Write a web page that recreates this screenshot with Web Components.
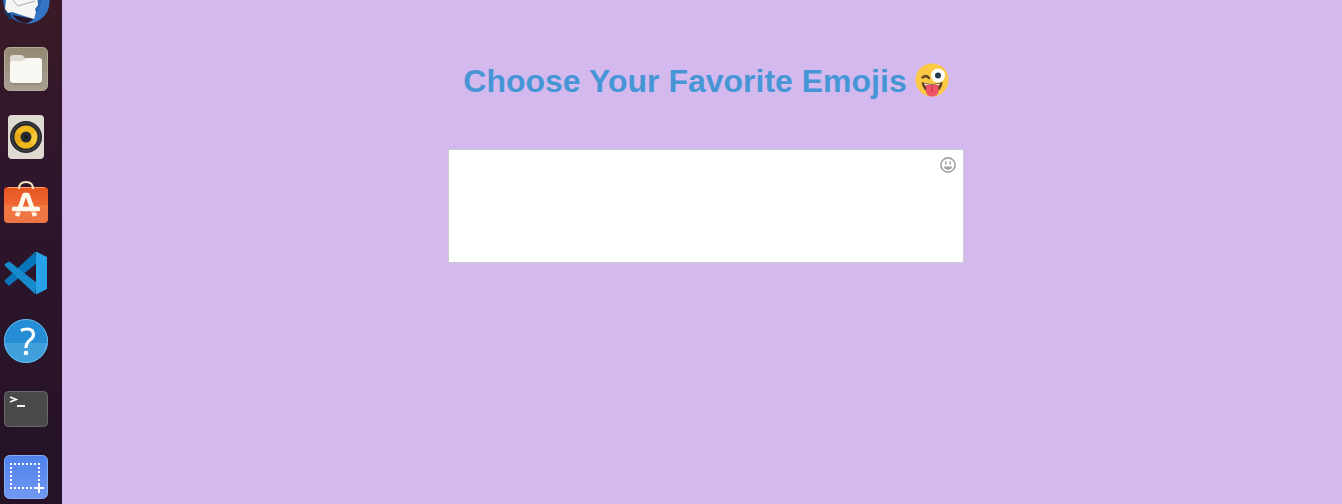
<!DOCTYPE html>
<html lang="en">
<head>
<meta charset="utf-8">
<title>Choose Your Favorite Emojis</title>
<style>
html, body { margin: 0; min-height: 100vh; background: #d4b9ef; }
body { font-family: "Liberation Sans", Arial, sans-serif; }
</style>
</head>
<body>
<desktop-view>
  <app-dock slot="dock"></app-dock>
  <emoji-page>
    <emoji-heading>Choose Your Favorite Emojis</emoji-heading>
    <emoji-field label="Your emojis"></emoji-field>
  </emoji-page>
</desktop-view>

<template id="desktop-view">
  <style>
    :host { display: grid; grid-template-columns: 62px 1fr; min-height: 100vh; }
  </style>
  <slot name="dock"></slot>
  <slot></slot>
</template>

<template id="app-dock">
  <style>
    :host { display: block; height: 100vh; overflow: hidden; background: linear-gradient(#3a1a26 0%, #2e162c 35%, #251226 100%); }
    nav { box-sizing: border-box; height: 100%; display: flex; flex-direction: column; justify-content: flex-end; gap: 24px; padding: 0 0 5px 4px; }
    button { flex: none; width: 44px; height: 44px; padding: 0; border: 0; background: none; }
    svg { display: block; width: 44px; height: 44px; overflow: visible; }
  </style>
  <nav aria-label="Applications">
    <button aria-label="Mail">
      <svg viewBox="0 0 44 44">
        <circle cx="22" cy="21" r="23" fill="#2a68b4"/>
        <path d="M38 4Q49 17 44 31Q38 44 22 45Q34 38 38 22Z" fill="#3475c5"/>
        <path d="M0 31L4 29L8 39L6 41Q1 36 0 31Z" fill="#163865"/>
        <path d="M8 36L30 40L24 44Q14 44 8 36Z" fill="#2a1526"/>
        <path d="M2 20L33 15L34 26L31 30L32 33L30 40L20 37L8 33L4 34L1 30Z" fill="#f5f5f3"/>
        <path d="M8 20L14 27L31 22" fill="none" stroke="#a8adb5" stroke-width="1"/>
      </svg>
    </button>
    <button aria-label="Files">
      <svg viewBox="0 0 44 44">
        <defs><linearGradient id="f" x2="0" y2="1"><stop stop-color="#958975"/><stop offset="1" stop-color="#a79f91"/></linearGradient></defs>
        <rect x=".5" y=".5" width="43" height="43" rx="5" fill="url(#f)" stroke="#b3ab98"/>
        <path d="M6 19V11Q6 8 9 8H17Q19 8 20 10L22 12V19Z" fill="#dfdad3"/>
        <path d="M6 18Q6 14 9 14H17Q20 14 21 12Q22 11 24 11H35Q38 11 38 14V33Q38 36 35 36H9Q6 36 6 33Z" fill="#f9f8f2"/>
        <path d="M7 36Q8 37 10 37H34Q37 37 38 35" fill="none" stroke="#857e6c"/>
      </svg>
    </button>
    <button aria-label="Music">
      <svg viewBox="0 0 44 44">
        <rect x="4" y="0" width="36" height="44" rx="4" fill="#dfdbd3"/>
        <circle cx="22" cy="22" r="16" fill="#282a2f"/>
        <circle cx="22" cy="22" r="14" fill="none" stroke="#474746" stroke-width="1"/>
        <circle cx="22" cy="22" r="11.500" fill="#f1b81e"/>
        <path d="M22 22L32 17A11 11 0 0 1 30 30Z" fill="#f8c83c"/>
        <path d="M22 22L12 17A11 11 0 0 0 14 30Z" fill="#e7aa15"/>
        <circle cx="22" cy="22" r="5.500" fill="#2a2b30"/>
        <circle cx="22" cy="22" r="2" fill="#17191b"/>
      </svg>
    </button>
    <button aria-label="Software">
      <svg viewBox="0 0 44 44">
        <defs><linearGradient id="s" x2="0" y2="1"><stop stop-color="#e85523"/><stop offset=".5" stop-color="#ed6731"/><stop offset=".51" stop-color="#f17742"/><stop offset="1" stop-color="#ee7544"/></linearGradient></defs>
        <rect x="0" y="4" width="44" height="36" rx="4" fill="url(#s)"/>
        <path d="M4 4.500H40" stroke="#ffa365"/>
        <path d="M15 6Q15-1 22-1Q29-1 29 6" fill="none" stroke="#f5dfbb" stroke-width="2"/>
        <path d="M13 33L20.500 12H23.500L31 33" fill="none" stroke="#fff8ec" stroke-width="4.500" stroke-linejoin="round"/>
        <path d="M10 28.800H34" stroke="#ed6a35"/>
        <path d="M10 26H34" stroke="#fffaf0" stroke-width="4.500" stroke-linecap="round"/>
      </svg>
    </button>
    <button aria-label="Code editor">
      <svg viewBox="0 0 44 44">
        <path d="M1 31Q0 30 1 29L31 1L33 12L6 34Q5 35 4 34Z" fill="#0875b8"/>
        <path d="M1 15Q0 14 1 13L4 11Q5 10 6 11L33 32L31 43Z" fill="#168bcc"/>
        <path d="M31 1L33 1L43 6V38L33 43L31 43Q32 43 32 40V4Q32 2 31 1Z" fill="#27a2e9"/>
      </svg>
    </button>
    <button aria-label="Help">
      <svg viewBox="0 0 44 44">
        <circle cx="22" cy="22" r="22" fill="#248dd5"/>
        <path d="M.1 24H43.900A22 22 0 0 1 .1 24Z" fill="#419fdc"/>
        <circle cx="22" cy="22" r="21.500" fill="none" stroke="#64b7e6"/>
        <path d="M17 11.500Q20 10 23 10Q29.500 10 29.500 15.500Q29.500 18.500 26 21Q22 24 22 29" fill="none" stroke="#fff" stroke-width="3.200"/>
        <circle cx="22" cy="34" r="2.300" fill="#fff"/>
      </svg>
    </button>
    <button aria-label="Terminal">
      <svg viewBox="0 0 44 44">
        <rect x=".5" y="4.500" width="43" height="35" rx="4" fill="#4b4a4a" stroke="#6a6868"/>
        <path d="M6 10L12 12.500L6 15" fill="none" stroke="#f4f4f4" stroke-width="1.800"/>
        <path d="M13 19H21" stroke="#f4f4f4" stroke-width="2"/>
      </svg>
    </button>
    <button aria-label="Screenshot">
      <svg viewBox="0 0 44 44">
        <defs><linearGradient id="p" x2="0" y2="1"><stop stop-color="#4e80ed"/><stop offset="1" stop-color="#7199f2"/></linearGradient></defs>
        <rect x=".5" y=".5" width="43" height="43" rx="5" fill="url(#p)" stroke="#86adf6"/>
        <path d="M6 9H36M35 12V28M7 12V34M6 33H30" fill="none" stroke="#fff" stroke-width="2" stroke-dasharray="2 2"/>
        <path d="M35 28V38M30 33H40" stroke="#fff" stroke-width="2"/>
      </svg>
    </button>
  </nav>
</template>

<template id="emoji-page">
  <style>
    :host { display: block; min-width: 0; }
    main { display: flex; flex-direction: column; align-items: center; gap: 49px; padding: 63px 0 0 8px; }
  </style>
  <main><slot></slot></main>
</template>

<template id="emoji-heading">
  <style>
    :host { display: block; }
    h1 { display: flex; align-items: flex-start; justify-content: center; gap: 8px; margin: 0; font-size: 32px; line-height: 37px; color: #4696d6; }
    svg { width: 34px; height: 34px; flex: none; }
  </style>
  <h1><span><slot></slot></span>
    <svg viewBox="0 0 34 34" role="img" aria-label="winking face with tongue">
      <circle cx="17" cy="17" r="16.500" fill="#fbc943"/>
      <path d="M7.500 14.500Q11 11.500 14 15" fill="none" stroke="#6b4926" stroke-width="2.500" stroke-linecap="round"/>
      <circle cx="23" cy="12.500" r="7" fill="#fff"/>
      <circle cx="23" cy="12.500" r="3" fill="#263b4c"/>
      <path d="M6.500 19Q17 23 27.500 19Q27.500 29 17 29Q7.500 29 6.500 19Z" fill="#624124"/>
      <path d="M9 20.500Q17 23 25 20.500L24 22.500H10Z" fill="#fff"/>
      <path d="M11 22H23.500V28Q23 33.500 17 33.500Q11 33 11 28Z" fill="#ef5266"/>
      <path d="M17 22V29" stroke="#c93d52" stroke-width="1.500"/>
    </svg>
  </h1>
</template>

<template id="emoji-field">
  <style>
    :host { display: block; position: relative; width: 516px; max-width: 100%; }
    textarea { display: block; box-sizing: border-box; width: 100%; height: 114px; margin: 0; padding: 8px 32px 8px 8px; border: 1px solid #cdcbd2; border-radius: 0; resize: none; outline: 0; background: #fff; font: 16px "Liberation Sans", Arial, sans-serif; }
    button { position: absolute; top: 8px; right: 8px; width: 16px; height: 16px; padding: 0; border: 0; background: none; }
    svg { display: block; width: 16px; height: 16px; }
  </style>
  <textarea></textarea>
  <button type="button" aria-label="Choose an emoji">
    <svg viewBox="0 0 17 17">
      <circle cx="8.500" cy="8.500" r="7.600" fill="none" stroke="#a2a2a2" stroke-width="1.700"/>
      <path d="M6.200 4.500V8M10.800 4.500V8" stroke="#a2a2a2" stroke-width="1.600"/>
      <path d="M4 10H13Q12 13.500 8.500 13.500Q5 13.500 4 10Z" fill="#a2a2a2"/>
    </svg>
  </button>
</template>

<script>
class TemplateElement extends HTMLElement {
  constructor() {
    super();
    const template = document.getElementById(this.localName);
    this.attachShadow({ mode: "open" }).append(template.content.cloneNode(true));
  }
}
customElements.define("desktop-view", class extends TemplateElement {});
customElements.define("app-dock", class extends TemplateElement {});
customElements.define("emoji-page", class extends TemplateElement {});
customElements.define("emoji-heading", class extends TemplateElement {});
customElements.define("emoji-field", class extends TemplateElement {
  connectedCallback() {
    this.shadowRoot.querySelector("textarea").setAttribute("aria-label", this.getAttribute("label"));
  }
});
</script>
</body>
</html>
